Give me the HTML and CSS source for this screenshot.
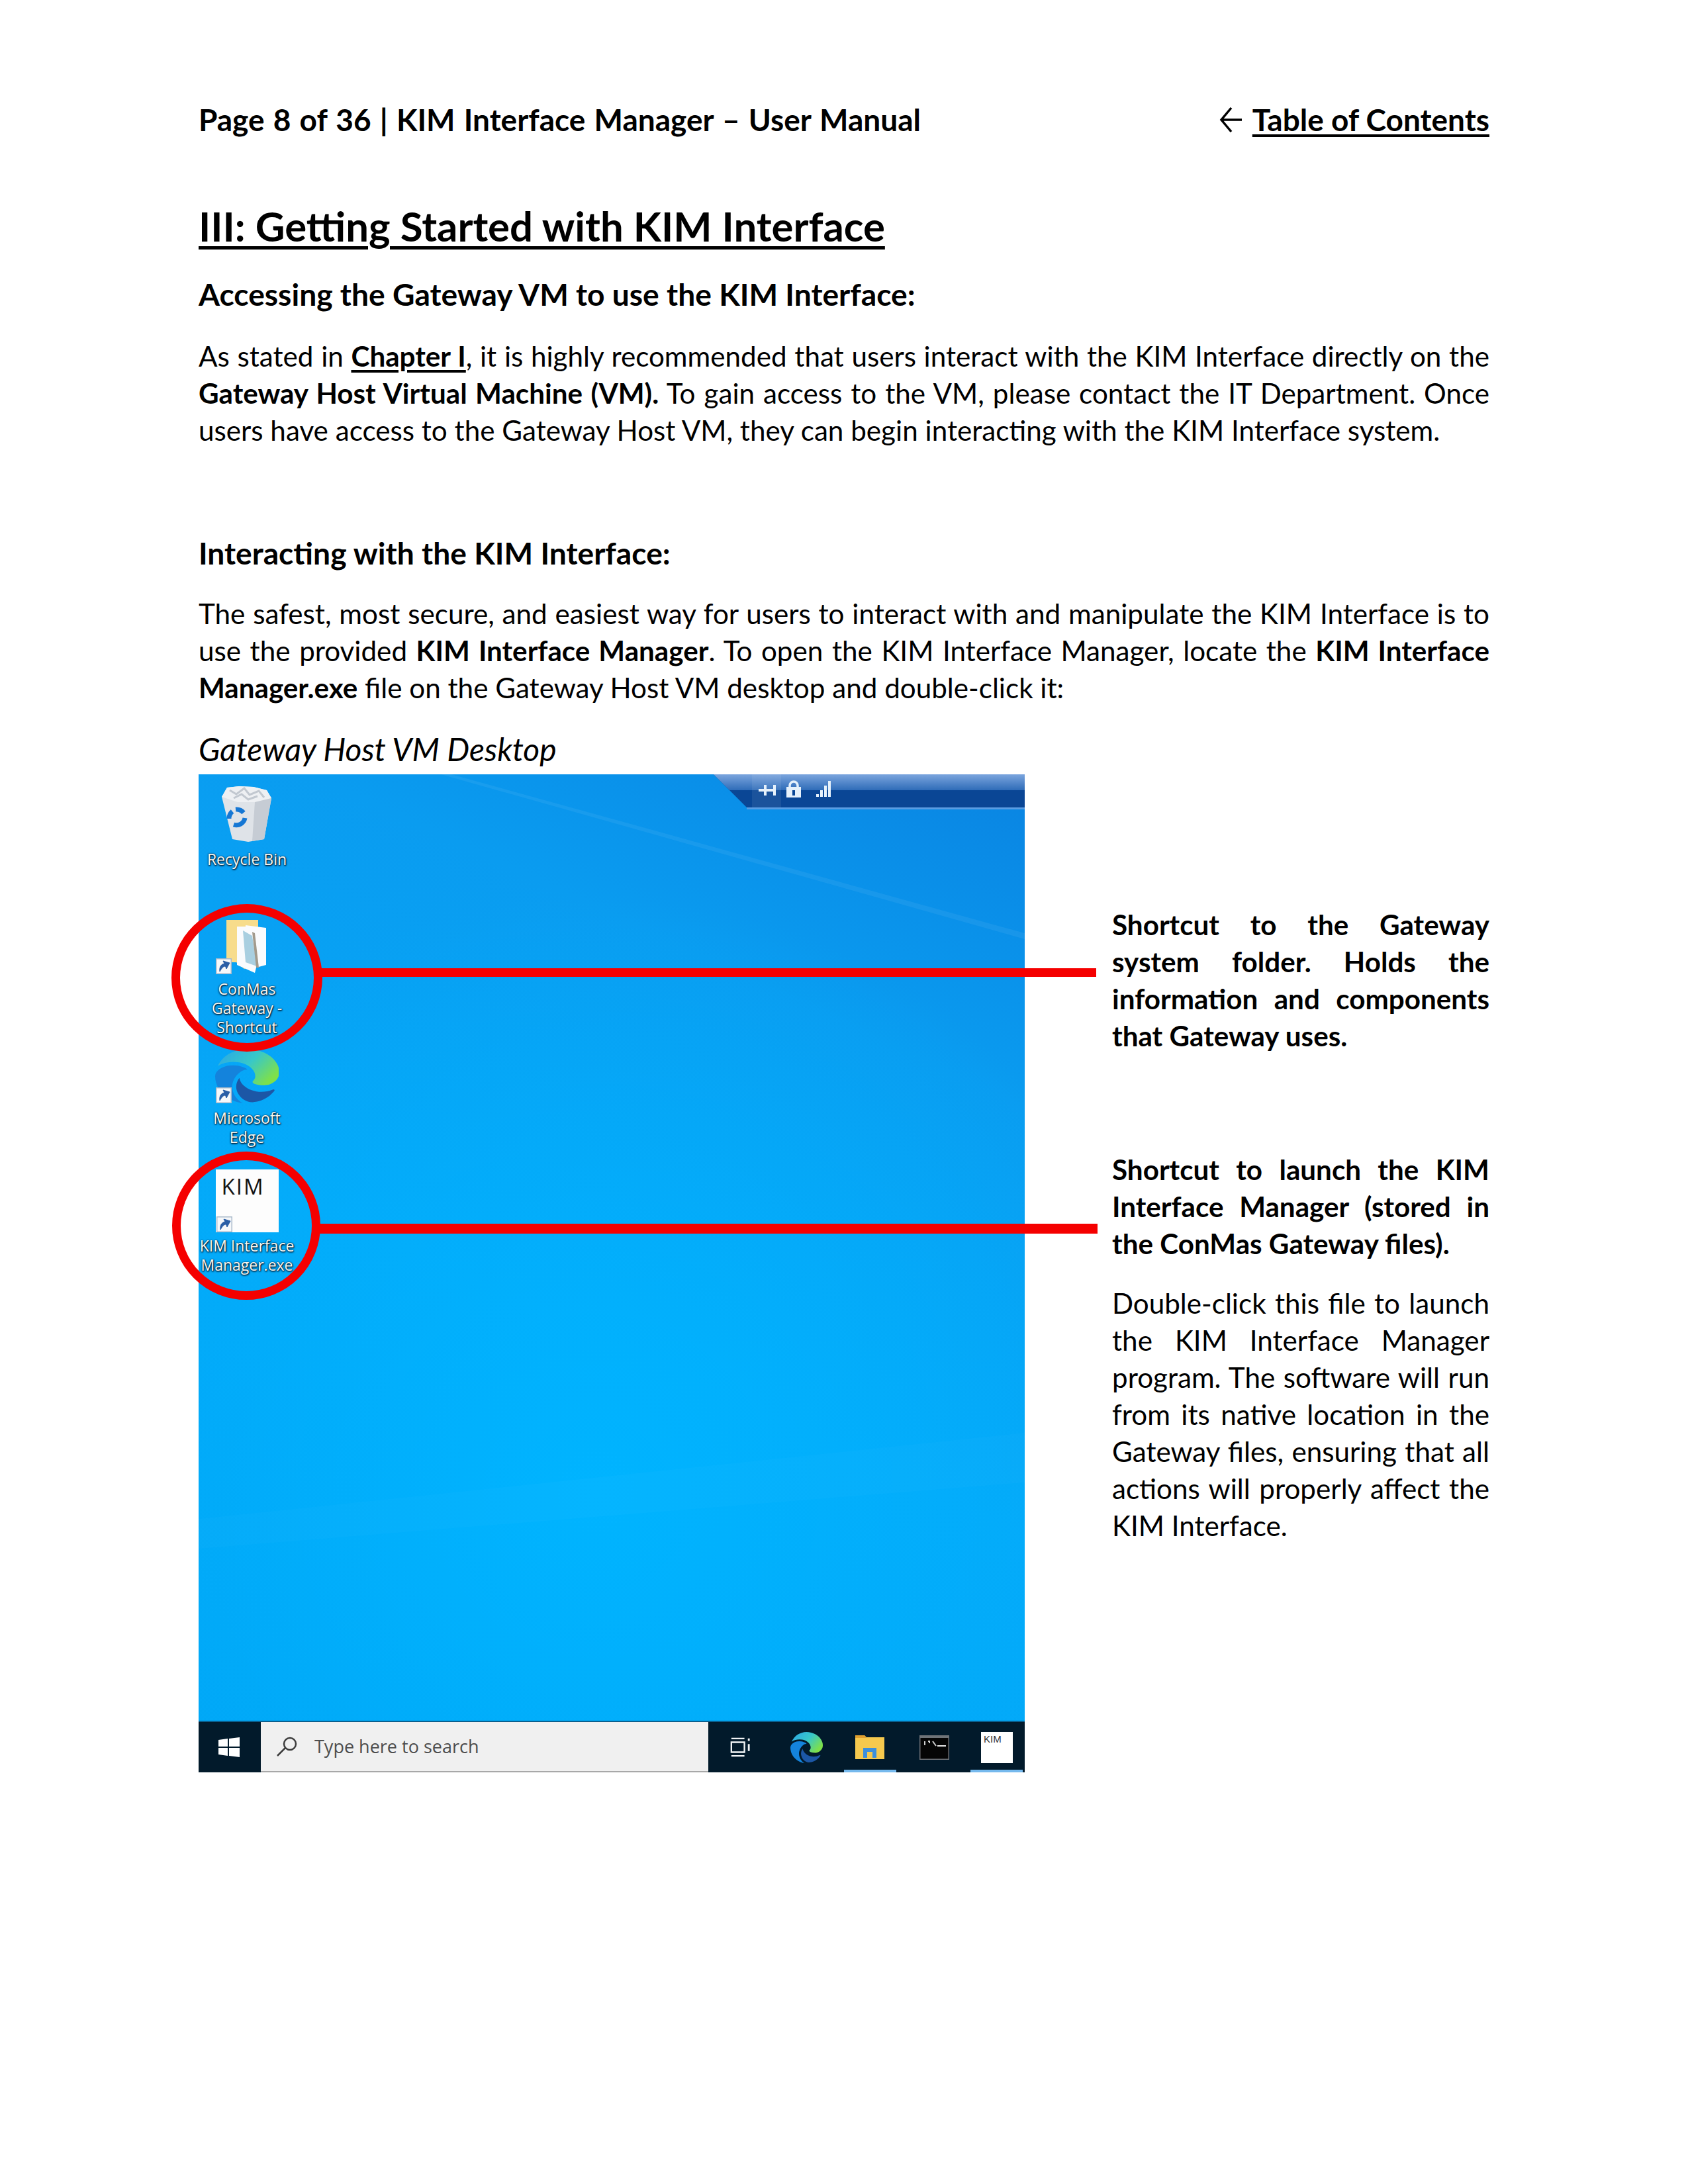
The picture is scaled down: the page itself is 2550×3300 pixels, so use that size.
FILE: index.html
```html
<!DOCTYPE html>
<html lang="en">
<head>
<meta charset="utf-8">
<title>KIM Interface Manager – User Manual</title>
<link rel="stylesheet" href="styles.css">
</head>
<body>
<svg class="defs" width="0" height="0" aria-hidden="true">
  <defs>
    <symbol id="shortcut" viewBox="0 0 24 24">
      <rect x="0.750" y="0.750" width="22.500" height="22.500" fill="#f6f8fa" stroke="#a9b9ca" stroke-width="1.500"/>
      <path d="M6 20 C5 13 8 9 13 8 L11 4 L21 7 L16 16 L14.500 12 C11 12 9 15 6 20Z" fill="#2a5ea6" stroke="#2a5ea6"/>
    </symbol>
    <linearGradient id="edgeTop" x1="0" y1="0" x2="1" y2="0.6">
      <stop offset="0" stop-color="#2aa5e8"/>
      <stop offset="0.55" stop-color="#38c8c8"/>
      <stop offset="1" stop-color="#7ee04a"/>
    </linearGradient>
    <symbol id="edge" viewBox="0 0 24 24" preserveAspectRatio="none">
      <path fill="#1c57a6" d="M21.860 17.860q.14 0 .25.12.1.13.1.25t-.11.33l-.32.46-.43.53-.44.5q-.21.25-.38.42l-.22.23q-.58.53-1.34 1.04-.76.51-1.6.91-.86.4-1.74.64t-1.67.24q-.9 0-1.69-.28-.8-.28-1.48-.78-.68-.5-1.22-1.17-.53-.66-.92-1.44-.38-.77-.58-1.6-.2-.83-.2-1.67 0-1 .32-1.96.33-.97.87-1.8.14.95.55 1.77.41.82 1.02 1.5.6.68 1.38 1.21.78.54 1.64.9.86.36 1.77.56.92.2 1.8.2 1.12 0 2.18-.24 1.06-.23 2.06-.72l.2-.1.2-.05z"/>
      <path fill="#1483dc" d="M6.360 16.590q0 1.100.27 2.150.27 1.060.78 2.030.51.96 1.240 1.770.74.82 1.660 1.400-1.470-.2-2.800-.74-1.330-.55-2.480-1.370-1.150-.83-2.080-1.900-.92-1.070-1.580-2.330T.36 14.940Q0 13.540 0 12.060q0-.81.32-1.490.31-.68.83-1.230.53-.55 1.200-.96.66-.4 1.350-.66.74-.27 1.500-.39.78-.12 1.550-.12.7 0 1.420.1.72.12 1.400.35.68.23 1.320.57.63.35 1.160.83-.35 0-.7.07-.33.07-.65.23v-.02q-.63.28-1.200.74-.57.46-1.050 1.040-.48.58-.87 1.260-.38.67-.65 1.390-.27.71-.42 1.440-.15.72-.15 1.380z"/>
      <path fill="url(#edgeTop)" d="M11.960.06q1.700 0 3.330.39 1.630.38 3.070 1.150 1.430.77 2.620 1.930 1.180 1.160 1.980 2.700.49.94.76 1.960.28 1 .28 2.080 0 .89-.23 1.700-.24.8-.69 1.480-.45.68-1.100 1.220-.64.53-1.450.88-.54.24-1.110.36-.58.13-1.160.13-.42 0-.97-.03-.54-.03-1.100-.12-.55-.09-1.050-.28-.5-.19-.84-.5-.12-.09-.23-.24-.1-.16-.1-.33 0-.15.16-.35.16-.2.35-.5.2-.28.36-.68.16-.4.16-.95 0-1.060-.4-1.960-.4-.91-1.060-1.640-.66-.74-1.520-1.280-.86-.55-1.790-.89-.84-.3-1.720-.44-.87-.14-1.760-.14-1.550 0-3.060.45T.94 7.550q.71-1.740 1.810-3.130 1.100-1.380 2.520-2.350Q6.680 1.100 8.370.58q1.700-.52 3.580-.52Z"/>
    </symbol>
  </defs>
</svg>

<main class="page">
  <header class="running-head">
    <span>Page 8 of 36 | KIM Interface Manager – User Manual</span>
    <span class="toc"><svg class="back-arrow" viewBox="0 0 36 42"><path d="M34 21H4M18 3L3 21L18 39" fill="none" stroke="#000" stroke-width="3.500"/></svg><a class="link">Table of Contents</a></span>
  </header>

  <h1 class="title"><a class="link">III: Getting Started with KIM Interface</a></h1>

  <h2 class="heading first">Accessing the Gateway VM to use the KIM Interface:</h2>
  <p class="para">
    <span class="line just">As stated in <a class="link strong">Chapter I</a>, it is highly recommended that users interact with the KIM Interface directly on the</span>
    <span class="line just"><b>Gateway Host Virtual Machine (VM).</b> To gain access to the VM, please contact the IT Department. Once</span>
    <span class="line">users have access to the Gateway Host VM, they can begin interacting with the KIM Interface system.</span>
  </p>

  <h2 class="heading second">Interacting with the KIM Interface:</h2>
  <p class="para">
    <span class="line just">The safest, most secure, and easiest way for users to interact with and manipulate the KIM Interface is to</span>
    <span class="line just">use the provided <b>KIM Interface Manager</b>. To open the KIM Interface Manager, locate the <b>KIM Interface</b></span>
    <span class="line"><b>Manager.exe</b> file on the Gateway Host VM desktop and double-click it:</span>
  </p>

  <p class="caption">Gateway Host VM Desktop</p>

  <section class="figure">
    <div class="desktop">
      <svg class="streaks" viewBox="0 0 1248 1508" preserveAspectRatio="none">
        <path d="M382 0 L1248 240 L1248 249 L366 0Z" fill="#ffffff" opacity=".06"/>
        <path d="M0 1125 L1248 995 L1248 1070 L0 1170Z" fill="#ffffff" opacity=".02"/>
      </svg>

      <svg class="conn-bar" viewBox="0 0 470 56">
        <defs>
          <linearGradient id="barTop" x1="0" y1="0" x2="0" y2="1">
            <stop offset="0" stop-color="#7ba5de"/>
            <stop offset="1" stop-color="#2f6cb8"/>
          </linearGradient>
        </defs>
        <polygon points="0,0 470,0 470,50 50,50" fill="#0a4695"/>
        <polygon points="0,0 470,0 470,24 24,24" fill="url(#barTop)"/>
        <rect x="50" y="50" width="420" height="3" fill="#5a9ce2"/>
        <rect x="58" y="0" width="44" height="50" fill="#ffffff" opacity=".07"/>
        <path d="M68 24H78M78 16V32M78 24H92M92 16V32" fill="none" stroke="#e6f1fb" stroke-width="4"/>
        <path d="M115 20V17a6 6 0 0 1 12 0V20" fill="none" stroke="#e6f1fb" stroke-width="3.500"/>
        <rect x="110" y="19" width="22" height="16" fill="#e6f1fb"/>
        <rect x="119" y="24" width="4" height="8" fill="#0a4695"/>
        <path d="M155 30h4v4h-4zM161 24h4v10h-4zM167 17h4v17h-4zM173 10h4v24h-4z" fill="#e6f1fb"/>
      </svg>

      <div class="dicon bin">
        <svg class="dicon-art" viewBox="0 0 96 96">
          <path d="M10 24 L18 10 L36 8 L58 9 L78 14 L85 26 L74 88 L50 92 L26 88Z" fill="#dfe3e8"/>
          <path d="M10 24 L18 10 L36 8 L58 9 L78 14 L85 26 L62 32 L34 32Z" fill="#eef0f3"/>
          <path d="M60 32 L85 26 L74 88 L56 91Z" fill="#c6ccd4"/>
          <path d="M22 14l10 6 12-9 8 10 14-6 8 10M28 26l12-6 10 8 14-5" fill="none" stroke="#c2c8d0" stroke-width="3"/>
          <g fill="none" stroke="#1577d4" stroke-width="7">
            <path d="M21 57 A14 14 0 0 1 26 46"/>
            <path d="M31 43 A14 14 0 0 1 43 48"/>
            <path d="M45 56 A13 13 0 0 1 28 66"/>
          </g>
        </svg>
        <span class="dicon-label">Recycle Bin</span>
      </div>

      <div class="dicon conmas">
        <svg class="dicon-art" viewBox="0 0 96 96">
          <path d="M17 14H65V80L44 88L32 78H17Z" fill="#f7dc8b"/>
          <path d="M33 24H46L46 22L77 26V82L62 86L60 94L33 82Z" fill="#fafbfd"/>
          <path d="M42 30L56 38L63 84L46 78Z" fill="#a9cfe0"/>
          <path d="M56 32L60 34L66 86L62 86Z" fill="#a29a8c"/>
          <use href="#shortcut" x="1" y="72" width="24" height="24"/>
        </svg>
        <span class="dicon-label">ConMas<br>Gateway -<br>Shortcut</span>
      </div>

      <div class="dicon msedge">
        <svg class="dicon-art" viewBox="0 0 96 96">
          <use href="#edge" x="0" y="14" width="97" height="82"/>
          <use href="#shortcut" x="1" y="72" width="24" height="24"/>
        </svg>
        <span class="dicon-label">Microsoft<br>Edge</span>
      </div>

      <div class="dicon kim">
        <div class="kim-tile">
          <span class="kim-word">KIM</span>
          <svg class="kim-shortcut" viewBox="0 0 24 24"><use href="#shortcut"/></svg>
        </div>
        <span class="dicon-label">KIM Interface<br>Manager.exe</span>
      </div>

      <footer class="taskbar">
        <div class="start">
          <svg class="start-logo" viewBox="0 0 32 30"><path d="M0 4L14 2V14H0ZM16 2L32 0V14H16ZM0 16H14V28L0 26ZM16 16H32V30L16 28Z" fill="#fff"/></svg>
        </div>
        <div class="search">
          <svg class="search-glass" viewBox="0 0 33 30"><circle cx="21" cy="11" r="9" fill="none" stroke="#3c3c3c" stroke-width="2.500"/><path d="M14 17L2 29" stroke="#3c3c3c" stroke-width="2.500"/></svg>
          <span>Type here to search</span>
        </div>
        <div class="task taskview">
          <svg class="task-art-view" viewBox="0 0 34 32"><path d="M3 2H24M3 30H24M3 8H24V24H3Z" fill="none" stroke="#f1f3f5" stroke-width="2.500"/><path d="M31 2V6M31 11V22" stroke="#f1f3f5" stroke-width="3"/></svg>
        </div>
        <div class="task"><svg class="task-edge"><use href="#edge"/></svg></div>
        <div class="task active">
          <svg class="task-folder" viewBox="0 0 44 36">
            <path d="M0 0H14L17 3H44V36H0Z" fill="#f6c94e"/><path d="M0 0H14L17 4H0Z" fill="#e0a030"/>
            <path d="M12 34V19H32V34H26V25H18V34Z" fill="#3c8fdc"/><rect x="18" y="25" width="8" height="9" fill="#f6c94e"/>
          </svg>
        </div>
        <div class="task cmd">
          <svg class="task-cmd" viewBox="0 0 45 37">
            <rect width="45" height="37" fill="#6f7378"/><rect x="1.500" y="4" width="42" height="31.500" fill="#050505"/>
            <path d="M8 9v6M13 9h2v3M20 9l5 7" stroke="#cfcfcf" stroke-width="2" fill="none"/><rect x="27" y="15" width="13" height="2" fill="#e8e8e8"/>
          </svg>
        </div>
        <div class="task kim-task active"><div class="kim-mini">KIM</div></div>
      </footer>
    </div>

    <aside class="notes">
      <p class="para note-one"><b>
        <span class="line just">Shortcut to the Gateway</span>
        <span class="line just">system folder. Holds the</span>
        <span class="line just">information and components</span>
        <span class="line">that Gateway uses.</span>
      </b></p>
      <p class="para note-two"><b>
        <span class="line just">Shortcut to launch the KIM</span>
        <span class="line just">Interface Manager (stored in</span>
        <span class="line">the ConMas Gateway files).</span>
      </b></p>
      <p class="para note-three">
        <span class="line just">Double-click this file to launch</span>
        <span class="line just">the KIM Interface Manager</span>
        <span class="line just">program. The software will run</span>
        <span class="line just">from its native location in the</span>
        <span class="line just">Gateway files, ensuring that all</span>
        <span class="line just">actions will properly affect the</span>
        <span class="line">KIM Interface.</span>
      </p>
    </aside>

    <div class="ring ring-one"></div>
    <div class="leader leader-one"></div>
    <div class="ring ring-two"></div>
    <div class="leader leader-two"></div>
  </section>
</main>
</body>
</html>
```

FILE: styles.css
```css
* { box-sizing: border-box; }
html, body { margin: 0; background: #fff; }
body {
  width: 2550px;
  height: 3300px;
  overflow: hidden;
  font-family: Lato, "Liberation Sans", sans-serif;
  font-size: 42.2px;
  line-height: 56px;
  color: #000;
}
.defs { position: absolute; }
.page { padding: 150px 300px 0; }

.running-head {
  display: flex;
  justify-content: space-between;
  font-size: 46px;
  font-weight: 700;
  line-height: 62px;
  word-spacing: 2px;
}
.toc { display: flex; align-items: center; word-spacing: 0; }
.back-arrow { width: 36px; height: 42px; margin-right: 14px; }
.link { text-decoration: underline; text-decoration-thickness: .085em; text-underline-offset: .11em; }
.strong { font-weight: 700; }

.title {
  margin: 91px 0 0;
  font-size: 61.7px;
  line-height: 76px;
  font-weight: 700;
}
.heading {
  margin: 0;
  font-size: 46.2px;
  line-height: 62px;
  font-weight: 700;
}
.heading.first { margin-top: 34px; padding-bottom: 2px; }
.heading.second { margin-top: 126px; }
.para { margin: 33px 0 0; }
.line { display: block; white-space: nowrap; }
.line.just { text-align: justify; text-align-last: justify; white-space: normal; }

.caption {
  margin: 34px 0 0;
  font-size: 48px;
  line-height: 62px;
  font-style: italic;
}

.figure {
  position: relative;
  display: flex;
  margin-top: 7px;
  gap: 132px;
  align-items: flex-start;
}
.desktop {
  position: relative;
  flex: none;
  display: flex;
  flex-direction: column;
  justify-content: flex-end;
  width: 1248px;
  height: 1508px;
  overflow: hidden;
  background:
    radial-gradient(ellipse 900px 900px at 48% 72%, #00b4ff 0%, rgba(0,176,255,0) 100%),
    linear-gradient(205deg, #0a84e2 0%, #0a9cf0 24%, #05a8f8 55%, #00a4f4 100%);
}
.streaks { position: absolute; inset: 0; width: 100%; height: 100%; }
.conn-bar { position: absolute; left: 778px; top: 0; width: 470px; height: 56px; }

.dicon {
  position: absolute;
  left: 0;
  width: 146px;
  display: flex;
  flex-direction: column;
  align-items: center;
  gap: 8px;
}
.bin { top: 10px; }
.conmas { top: 206px; }
.msedge { top: 401px; }
.kim { top: 597px; gap: 6px; }
.dicon-art { display: block; width: 96px; height: 96px; flex: none; }
.dicon-label {
  font-family: "Open Sans", sans-serif;
  font-size: 23px;
  line-height: 29px;
  color: #f7f7f2;
  text-align: center;
  white-space: nowrap;
  text-shadow: 1px 1px 2px #06233c, 0 1px 3px #06233c, 0 0 2px #0b3a60;
}
.kim-tile {
  position: relative;
  width: 95px;
  height: 95px;
  background: #fdfdfd;
}
.kim-word {
  position: absolute;
  left: 9px;
  top: 6px;
  font-family: "Open Sans", sans-serif;
  font-size: 33px;
  line-height: 40px;
  letter-spacing: 2px;
  color: #141414;
}
.kim-shortcut { position: absolute; left: 1px; bottom: 0; width: 24px; height: 24px; }

.taskbar {
  position: relative;
  flex: none;
  display: flex;
  height: 78px;
  background: #021a2b;
  border-top: 2px solid #0a5f8e;
}
.start {
  flex: none;
  width: 94px;
  display: flex;
  align-items: center;
  justify-content: center;
}
.start-logo { width: 32px; height: 30px; margin-left: -2px; }
.search {
  flex: none;
  width: 676px;
  display: flex;
  align-items: center;
  gap: 25px;
  padding: 0 0 0 23px;
  background: #f0f0f0;
  border-bottom: 2px solid #a8a8a8;
  font-family: "Open Sans", sans-serif;
  font-size: 27px;
  line-height: 30px;
  color: #4d4d4d;
}
.search-glass { width: 33px; height: 30px; flex: none; }
.task {
  position: relative;
  flex: none;
  width: 96px;
  display: flex;
  align-items: center;
  justify-content: center;
}
.taskview { margin-right: 4px; }
.task-art-view { width: 32px; height: 32px; }
.task-edge { width: 49px; height: 47px; }
.task-folder { width: 44px; height: 36px; }
.cmd { width: 99px; }
.task-cmd { width: 45px; height: 37px; }
.kim-task { width: 87px; }
.kim-mini {
  width: 48px;
  height: 47px;
  margin-left: 3px;
  padding: 2px 0 0 4px;
  background: #fff;
  font-family: "Liberation Sans", sans-serif;
  font-size: 15px;
  line-height: 18px;
  color: #333;
}
.active::after {
  content: "";
  position: absolute;
  left: 50%;
  bottom: 0;
  width: 79px;
  height: 4px;
  margin-left: -39px;
  background: #76b9ed;
}

.notes { flex: none; width: 570px; padding-top: 199px; }
.notes .para { margin: 0; }
.notes .note-two { margin-top: 146px; }
.notes .note-three { margin-top: 34px; }

.ring {
  position: absolute;
  border: 13px solid #f50000;
  border-radius: 50%;
}
.ring-one { left: -41px; top: 196px; width: 228px; height: 223px; }
.ring-two { left: -40px; top: 570px; width: 224px; height: 224px; }
.leader { position: absolute; background: #f50000; }
.leader-one { left: 185px; top: 293px; width: 1171px; height: 13px; }
.leader-two { left: 182px; top: 679px; width: 1176px; height: 15px; }
```
